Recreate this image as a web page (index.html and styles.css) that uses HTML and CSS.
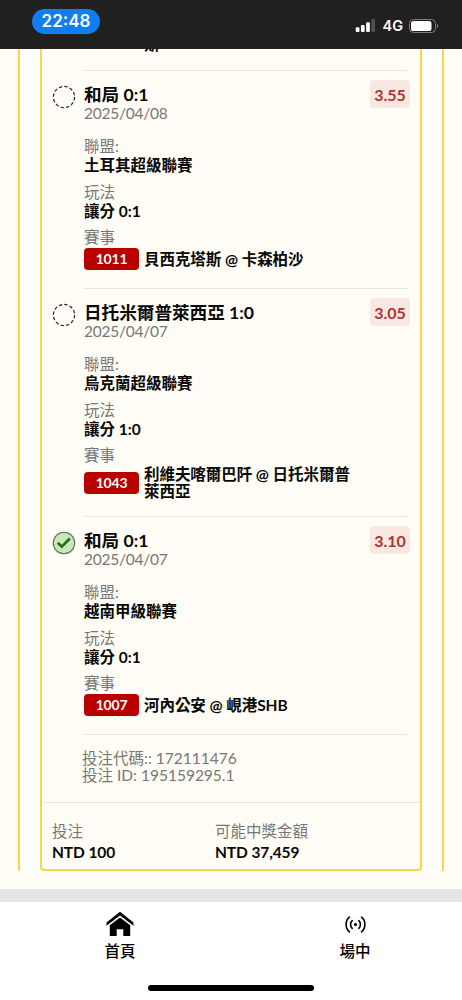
FILE: index.html
```html
<!DOCTYPE html>
<html lang="zh-Hant">
<head>
<meta charset="utf-8">
<title>投注</title>
<link rel="stylesheet" href="styles.css">
</head>
<body>
<div class="screen">
  <header class="status">
    <span class="clock">22:48</span>
    <div class="indicators">
      <svg class="signal" width="21" height="13" viewBox="0 0 21 14"><rect x="0" y="9" width="4" height="5" rx="1.2" fill="#fff"/><rect x="5.6" y="6.5" width="4" height="7.5" rx="1.2" fill="#fff"/><rect x="11.2" y="3.5" width="4" height="10.5" rx="1.2" fill="#fff"/><rect x="16.8" y="0" width="4" height="14" rx="1.2" fill="#505050"/></svg>
      <span class="network">4G</span>
      <svg class="battery" width="30" height="14" viewBox="0 0 30 14"><rect x=".5" y=".5" width="26" height="13" rx="4" fill="none" stroke="#7c7c7c"/><rect x="2" y="2" width="20.5" height="10" rx="2.6" fill="#fff"/><path d="M28 4.7v4.6c1.8-.8 1.8-3.8 0-4.6z" fill="#7c7c7c"/></svg>
    </div>
  </header>
  <main class="carousel">
    <div class="peek peek-left"></div>
    <article class="card">
      <div class="cut"><span>斯</span></div>
      <section class="bet">
        <div class="mark"><svg width="24" height="24" viewBox="0 0 24 24"><circle cx="12" cy="12" r="10.6" fill="none" stroke="#222" stroke-width="1.2" stroke-dasharray="3.4 2.15"/></svg></div>
        <div class="detail">
          <div class="head"><div><h2>和局 0:1</h2><p class="date">2025/04/08</p></div><span class="odds">3.55</span></div>
          <dl><dt>聯盟:</dt><dd>土耳其超級聯賽</dd><dt>玩法</dt><dd>讓分 0:1</dd><dt>賽事</dt></dl>
          <div class="match"><span class="code">1011</span><span class="teams">貝西克塔斯 @ 卡森柏沙</span></div>
        </div>
      </section>
      <section class="bet bet-tall">
        <div class="mark"><svg width="24" height="24" viewBox="0 0 24 24"><circle cx="12" cy="12" r="10.6" fill="none" stroke="#222" stroke-width="1.2" stroke-dasharray="3.4 2.15"/></svg></div>
        <div class="detail">
          <div class="head"><div><h2>日托米爾普萊西亞 1:0</h2><p class="date">2025/04/07</p></div><span class="odds">3.05</span></div>
          <dl><dt>聯盟:</dt><dd>烏克蘭超級聯賽</dd><dt>玩法</dt><dd>讓分 1:0</dd><dt>賽事</dt></dl>
          <div class="match"><span class="code">1043</span><span>利維夫喀爾巴阡 @ 日托米爾普<br>萊西亞</span></div>
        </div>
      </section>
      <section class="bet">
        <div class="mark"><svg width="24" height="24" viewBox="0 0 24 24"><circle cx="12" cy="12" r="10.7" fill="#c9e6bd" stroke="#4c7548" stroke-width="1.1"/><path d="M5.8 11.8l4 3.9 8-8.2" fill="none" stroke="#22701f" stroke-width="2.7"/></svg></div>
        <div class="detail">
          <div class="head"><div><h2>和局 0:1</h2><p class="date">2025/04/07</p></div><span class="odds">3.10</span></div>
          <dl><dt>聯盟:</dt><dd>越南甲級聯賽</dd><dt>玩法</dt><dd>讓分 0:1</dd><dt>賽事</dt></dl>
          <div class="match"><span class="code">1007</span><span class="teams">河內公安 @ 峴港SHB</span></div>
        </div>
      </section>
      <div class="refs"><p>投注代碼:: 172111476</p><p>投注 ID: 195159295.1</p></div>
      <footer class="totals">
        <div><p class="label">投注</p><p class="amount">NTD 100</p></div>
        <div><p class="label">可能中獎金額</p><p class="amount">NTD 37,459</p></div>
      </footer>
    </article>
    <div class="peek peek-right"></div>
  </main>
  <div class="space"></div>
  <div class="band"></div>
  <nav class="tabs">
    <div class="tab">
      <svg width="28" height="26" viewBox="0 0 28 26"><path d="M14 .8L27.5 11.5v3.3L14 4.6.5 14.8v-3.3z" fill="#000"/><path d="M14 6.4l10.2 7.8V25h-6.9v-6.8h-6.6V25H3.8V14.2z" fill="#000"/></svg>
      <span>首頁</span>
    </div>
    <div class="tab">
      <svg width="28" height="26" viewBox="0 0 28 26"><g fill="none" stroke="#000" stroke-width="1.6" stroke-linecap="round"><path d="M8.5 6.2C4 9.5 4 17.5 8.5 20.8M20.5 6.2C25 9.5 25 17.5 20.5 20.8M11.2 9.7c-2.2 2-2.2 5.6 0 7.6M17.8 9.7c2.2 2 2.2 5.6 0 7.6"/></g><circle cx="14.5" cy="13.5" r="1.5"/></svg>
      <span>場中</span>
    </div>
  </nav>
  <div class="home"><i></i></div>
</div>
</body>
</html>
```

FILE: styles.css
```css
* { box-sizing: border-box; margin: 0; padding: 0; }
body { width: 462px; background: #fff; color: #080808; font: 15.5px/19px Lato, "Noto Sans CJK TC", sans-serif; }
.screen { height: 1000px; display: flex; flex-direction: column; overflow: hidden; }
.status { height: 49px; flex: none; background: #202020; display: flex; justify-content: space-between; padding: 9px 23px 0 32px; color: #fff; font-family: Inter, sans-serif; }
.clock { width: 68px; height: 25px; border-radius: 13px; background: #117df0; text-align: center; font-size: 17px; line-height: 25px; font-weight: 600; }
.indicators { display: flex; align-items: center; height: 33px; }
.network { font-size: 14.5px; font-weight: 600; margin: 0 6px 0 6px; }
.carousel { height: 822px; flex: none; display: flex; justify-content: space-between; background: #fff; }
.peek { width: 20px; background: #fffdf5; }
.peek-left { border-right: 2px solid #fad648; }
.peek-right { border-left: 2px solid #fad648; }
.card { width: 382px; border: 2px solid #fad648; border-top: 0; border-radius: 0 0 4px 4px; background: #fffdf5; display: flex; flex-direction: column; }
.cut { height: 21px; flex: none; overflow: hidden; padding-left: 102px; font-weight: 700; }
.cut span { display: block; margin-top: -14px; }
.bet { height: 218px; flex: none; display: flex; padding-left: 9.5px; }
.bet-tall { height: 228px; }
.mark { width: 32.5px; padding-top: 15px; }
.detail { width: 323px; border-top: 1px solid #e9e6df; padding-top: 13px; }
.head { display: flex; justify-content: space-between; height: 53.5px; margin-right: -3px; }
h2 { font-size: 17.6px; line-height: 21px; font-weight: 700; }
.date { line-height: 17px; color: #777; letter-spacing: -.25px; }
.odds { width: 40px; height: 28px; margin-top: -4px; border-radius: 4px; background: #f8e8e1; color: #ad3430; font-size: 16px; line-height: 29px; font-weight: 700; text-align: center; }
dt { color: #777; }
dl { margin-top: -.5px; }
dd { font-weight: 700; margin-bottom: 7.5px; }
.match { min-height: 23px; display: flex; align-items: center; gap: 5px; line-height: 17px; font-weight: 700; letter-spacing: -.05px; }
.teams { padding-top: 1px; }
.bet-tall .match { padding-top: 1px; }
.code { width: 55px; height: 22px; flex: none; border-radius: 4px; background: #b80000; color: #fff; font-size: 14px; line-height: 22px; text-align: center; letter-spacing: -.2px; }
.refs { margin: 0 13px 0 42px; height: 68px; border-top: 1px solid #e9e6df; padding-top: 15px; color: #777; line-height: 17px; }
.refs p { margin-left: -2px; }
.totals { flex: 1; display: flex; border-top: 1px solid #e5e5df; padding: 18px 10px 0; }
.totals div { width: 163px; }
.totals p { line-height: 20.5px; }
.label { color: #777; }
.amount { font-weight: 700; letter-spacing: -.1px; }
.space { height: 18px; flex: none; background: #fffdf5; }
.band { height: 13px; flex: none; background: #e5e5e5; }
.tabs { height: 83px; flex: none; display: flex; justify-content: space-between; padding: 9px 67px 0 80px; }
.tab { width: 80px; display: flex; flex-direction: column; align-items: center; font-weight: 500; }
.tab span { margin-top: 5px; color: #000; }
.home { display: flex; justify-content: center; }
.home i { width: 166px; height: 6px; border-radius: 3px; background: #000; }
```
